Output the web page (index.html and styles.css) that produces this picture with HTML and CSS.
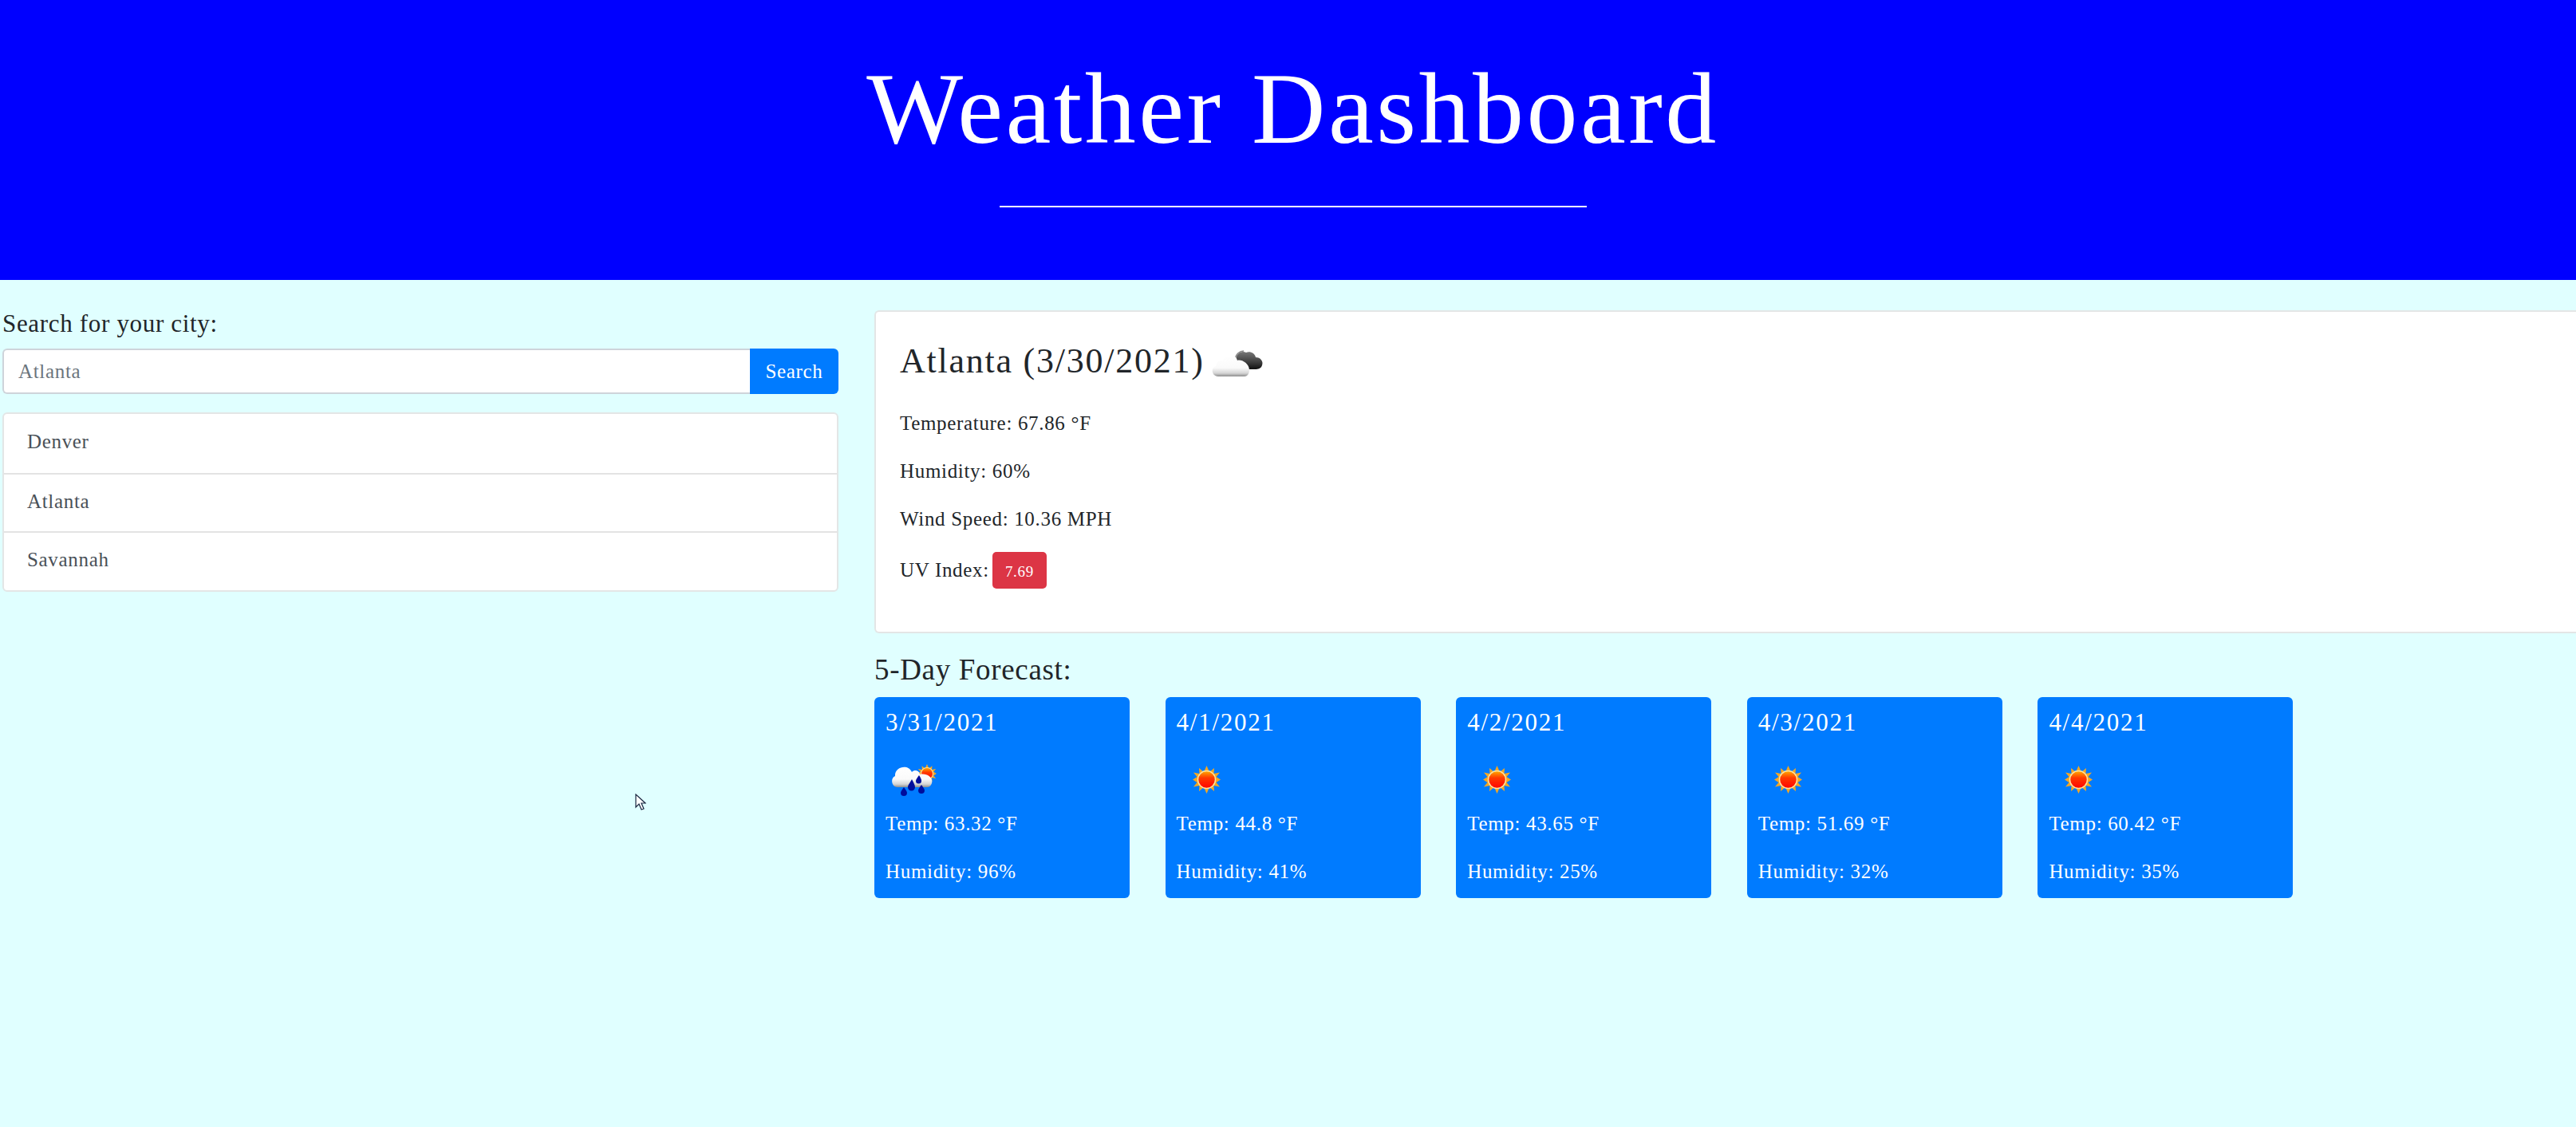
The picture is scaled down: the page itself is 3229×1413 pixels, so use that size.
FILE: index.html
```html
<!DOCTYPE html>
<html lang="en">
<head>
<meta charset="utf-8">
<title>Weather Dashboard</title>
<link rel="stylesheet" href="styles.css">
</head>
<body>
<svg class="defs" width="0" height="0" aria-hidden="true">
  <defs>
    <linearGradient id="cloudWhite" x1="0" y1="0" x2="0" y2="1">
      <stop offset="0" stop-color="#ffffff"/>
      <stop offset="0.6" stop-color="#fafafa"/>
      <stop offset="0.85" stop-color="#d4d4d4"/>
      <stop offset="1" stop-color="#8d8d8d"/>
    </linearGradient>
    <linearGradient id="cloudDark" x1="0" y1="0" x2="0" y2="1">
      <stop offset="0" stop-color="#777777"/>
      <stop offset="0.6" stop-color="#3d3d3d"/>
      <stop offset="1" stop-color="#111111"/>
    </linearGradient>
    <linearGradient id="sunFill" x1="0" y1="0" x2="0" y2="1">
      <stop offset="0" stop-color="#ffb000"/>
      <stop offset="0.4" stop-color="#ff3a00"/>
      <stop offset="1" stop-color="#ff0000"/>
    </linearGradient>
    <filter id="soft" x="-10%" y="-10%" width="120%" height="120%"><feGaussianBlur stdDeviation="0.5"/></filter>
    <symbol id="sun" viewBox="0 0 75 75">
      <g filter="url(#soft)">
        <path fill="#f5a623" d="M37.5 20 41 28 47 23 46.500 30 54 28.500 49.500 34 55 37.500 49.500 41 54 46.500 46.500 45 47 52 41 47 37.500 55 34 47 28 52 28.500 45 21 46.500 25.500 41 20 37.500 25.500 34 21 28.500 28.500 30 28 23 34 28Z"/>
        <circle cx="37.500" cy="37.500" r="11" fill="url(#sunFill)" stroke="#ffe2a0" stroke-width="1.500"/>
      </g>
    </symbol>
  </defs>
</svg>
<div class="page">
  <header class="banner">
    <h1 class="banner-title">Weather Dashboard</h1>
    <div class="banner-rule"></div>
  </header>
  <main class="layout">
    <section class="sidebar">
      <label class="search-label" for="city">Search for your city:</label>
      <div class="search-group">
        <input class="search-input" id="city" type="text" placeholder="Atlanta">
        <button class="search-button" type="button">Search</button>
      </div>
      <ul class="city-list">
        <li class="city-item">Denver</li>
        <li class="city-item">Atlanta</li>
        <li class="city-item">Savannah</li>
      </ul>
    </section>
    <section class="content">
      <div class="today">
        <h3 class="today-title">Atlanta (3/30/2021)
          <svg class="today-icon" viewBox="0 0 80 50" aria-hidden="true">
            <g filter="url(#soft)">
              <path fill="url(#cloudDark)" d="M46 20C47 12 53 8 59 11 64 9 70 12 71 17 77 17 81 22 79 27 78 31 74 32 70 32L52 32C47 28 44 24 46 20Z"/>
              <path fill="none" stroke="#8a8a8a" stroke-width="1.500" d="M45 20C46 13 51 9 56 9"/>
              <path fill="url(#cloudWhite)" d="M24 41C16 41 14 30 21 28 22 22 27 20 30 21 34 12 46 12 48 21 52 19 63 24 63 33 63 38 60 41 57 41Z"/>
            </g>
          </svg>
        </h3>
        <p class="today-line">Temperature: 67.86 °F</p>
        <p class="today-line">Humidity: 60%</p>
        <p class="today-line">Wind Speed: 10.36 MPH</p>
        <p class="today-line uv-line">UV Index: <span class="uv-badge">7.69</span></p>
      </div>
      <h4 class="forecast-title">5-Day Forecast:</h4>
      <div class="forecast-row">
        <article class="day-card">
          <h5 class="day-date">3/31/2021</h5>
          <svg class="day-icon" viewBox="0 0 75 75" aria-hidden="true">
            <use href="#sun" x="26.500" y="4.500" width="51" height="51"/>
            <g filter="url(#soft)">
              <path fill="url(#cloudWhite)" d="M15 47C7 47 6 35 12 33 11 22 28 17 33 28 37 24 43 27 43 31 52 29 60 35 58 42 57 45 55 47 52 47Z"/>
              <path fill="#00109c" d="M23 47C25 50 27 52 27 54A4 4 0 0 1 19 54C19 52 21 50 23 47Z"/>
              <path fill="#00109c" d="M33 37C35 41 37 44 37 47A4.500 4.500 0 0 1 28 47C28 44 31 41 33 37Z"/>
              <path fill="#00109c" d="M45 44C47 47 49 49 49 51A4 4 0 0 1 41 51C41 49 43 47 45 44Z"/>
              <path fill="#00109c" d="M42 32C44 35 45 37 45 39A3.500 3.500 0 0 1 38 39C38 37 40 35 42 32Z"/>
            </g>
          </svg>
          <p class="day-line">Temp: 63.32 °F</p>
          <p class="day-line">Humidity: 96%</p>
        </article>
        <article class="day-card">
          <h5 class="day-date">4/1/2021</h5>
          <svg class="day-icon" aria-hidden="true"><use href="#sun"/></svg>
          <p class="day-line">Temp: 44.8 °F</p>
          <p class="day-line">Humidity: 41%</p>
        </article>
        <article class="day-card">
          <h5 class="day-date">4/2/2021</h5>
          <svg class="day-icon" aria-hidden="true"><use href="#sun"/></svg>
          <p class="day-line">Temp: 43.65 °F</p>
          <p class="day-line">Humidity: 25%</p>
        </article>
        <article class="day-card">
          <h5 class="day-date">4/3/2021</h5>
          <svg class="day-icon" aria-hidden="true"><use href="#sun"/></svg>
          <p class="day-line">Temp: 51.69 °F</p>
          <p class="day-line">Humidity: 32%</p>
        </article>
        <article class="day-card">
          <h5 class="day-date">4/4/2021</h5>
          <svg class="day-icon" aria-hidden="true"><use href="#sun"/></svg>
          <p class="day-line">Temp: 60.42 °F</p>
          <p class="day-line">Humidity: 35%</p>
        </article>
      </div>
    </section>
  </main>
</div>
<svg class="cursor" viewBox="0 0 14 21" aria-hidden="true">
  <path fill="#fff" stroke="#1a2740" stroke-width="1.200" d="M1 1V17L5 13 8 20 11 19 8 12H13Z"/>
</svg>
</body>
</html>
```
FILE: styles.css
```css
* { box-sizing: border-box; }
html, body { margin: 0; padding: 0; overflow: hidden; }
body {
  position: relative;
  width: 3229px;
  height: 1413px;
  background: #e0ffff;
  color: #212529;
  font-family: "Liberation Serif", "DejaVu Serif", serif;
  font-size: 25px;
  line-height: 36px;
  font-variant-numeric: oldstyle-nums;
  letter-spacing: 0.027em;
}
.defs { position: absolute; }
.page { width: 3229px; }
.banner {
  height: 351px;
  padding: 64px 0 0 12px;
  background: #0000ff;
  color: #fff;
  text-align: center;
}
.banner-title {
  margin: 0 0 50px;
  font-size: 128px;
  font-weight: 400;
  line-height: 144px;
  letter-spacing: 0.027em;
}
.banner-rule { width: 736px; height: 2px; margin: 0 auto; background: #fff; }
.layout { display: flex; align-items: flex-start; }
.sidebar { flex: none; width: 1051px; padding: 36px 0 0 3px; margin-right: 45px; }
.search-label { display: block; margin-bottom: 12px; font-size: 31px; line-height: 38px; }
.search-group { display: flex; height: 57px; }
.search-input {
  flex: 1;
  min-width: 0;
  padding: 0 18px;
  border: 2px solid #ced4da;
  border-right: 0;
  border-radius: 6px 0 0 6px;
  background: #fff;
  font: inherit;
  letter-spacing: inherit;
}
.search-input::placeholder { color: #6c757d; opacity: 1; }
.search-button {
  flex: none;
  width: 111px;
  padding: 0;
  border: 0;
  border-radius: 0 6px 6px 0;
  background: #007bff;
  color: #fff;
  font: inherit;
  letter-spacing: inherit;
}
.city-list {
  margin: 23px 0 0;
  padding: 0;
  list-style: none;
  background: #fff;
  border: 2px solid #e3e6e6;
  border-radius: 6px;
}
.city-item { height: 73.500px; padding: 17px 29px 0; color: #495057; }
.city-item + .city-item { padding-top: 16px; border-top: 2px solid #e3e3e3; }
.content { flex: none; width: 2133px; padding-top: 38px; }
.today {
  height: 405px;
  padding: 30px;
  background: #fff;
  border: 2px solid #e3e6e6;
  border-right: 0;
  border-radius: 6px 0 0 6px;
}
.today-title { display: flex; align-items: center; gap: 8px; height: 64px; margin: 0 0 28px; font-size: 44px; font-weight: 400; line-height: 50px; letter-spacing: 0.04em; }
.today-icon { width: 80px; height: 50px; margin: 6px 0 0 -15px; }
.today-line { margin: 0 0 24px; }
.uv-line { display: flex; align-items: center; gap: 4px; margin-top: -1px; }
.uv-badge {
  display: flex;
  justify-content: center;
  align-items: center;
  width: 68px;
  height: 46px;
  padding-top: 4px;
  border-radius: 5px;
  background: #dc3545;
  color: #fff;
  font-size: 19px;
}
.forecast-title { margin: 24px 0 13px; font-size: 37px; font-weight: 400; line-height: 43px; }
.forecast-row { display: flex; gap: 44.600px; }
.day-card {
  width: 320px;
  height: 252px;
  padding: 14px 14px 0;
  background: #007bff;
  border-radius: 6px;
  color: #fff;
}
.day-date { margin: 0; font-size: 31px; font-weight: 400; line-height: 36px; letter-spacing: 0.056em; }
.day-icon { display: block; width: 75px; height: 75px; margin-top: 16px; }
.day-line { margin: 0 0 24px; }
.cursor { position: absolute; left: 796px; top: 995px; width: 14px; height: 21px; }
```
